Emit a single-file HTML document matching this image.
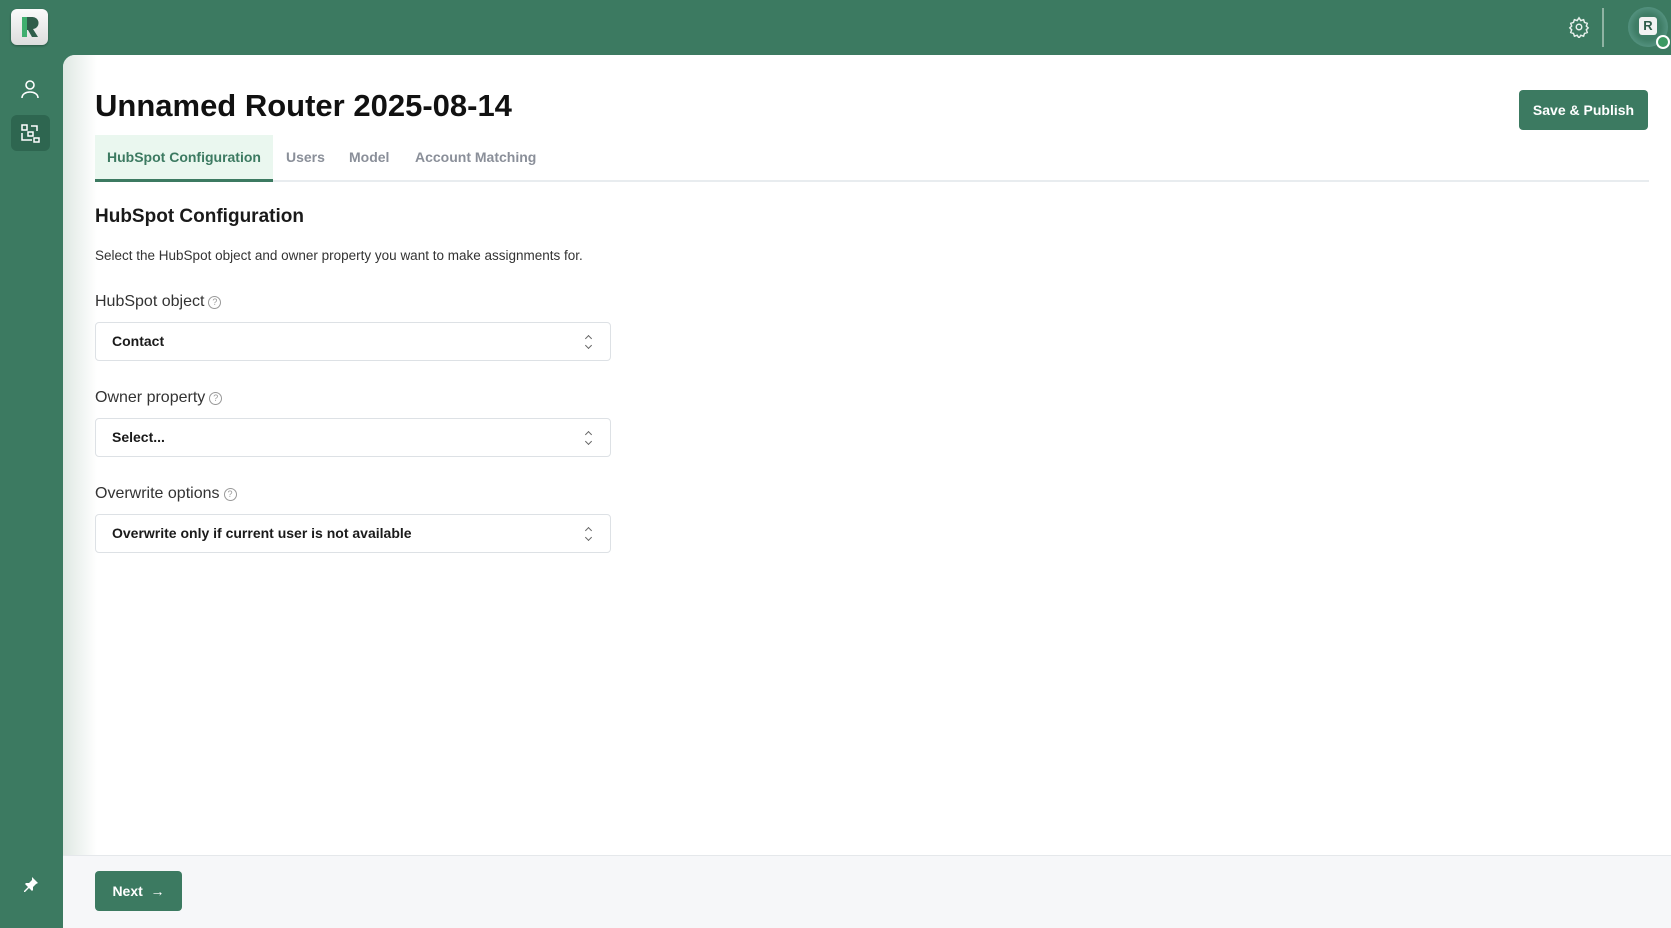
<!DOCTYPE html>
<html><head><meta charset="utf-8"><style>
*{box-sizing:border-box;margin:0;padding:0}
body{width:1671px;height:928px;overflow:hidden;background:#3c7a61;font-family:"Liberation Sans",sans-serif;position:relative}
.panel{position:absolute;left:63px;top:55px;right:0;bottom:0;background:#fff;border-top-left-radius:12px;overflow:hidden}
.panel:before{content:"";position:absolute;left:0;top:0;bottom:0;width:34px;background:linear-gradient(90deg,#dfe8e3,#fff)}
.abs{position:absolute}
h1{position:absolute;left:32px;top:33px;font-size:31px;font-weight:700;color:#111}
.tabs{position:absolute;left:32px;top:80px;right:22px;height:47px;border-bottom:2px solid #e8ecef}
.tab{position:absolute;top:0;height:47px;line-height:45px;font-size:14px;font-weight:700;color:#8a8f99}
.tab.on{background:#eaf7ef;color:#3c7a61;border-bottom:3px solid #3c7a61;padding:0 12px;left:0}
h2{position:absolute;left:32px;top:151px;font-size:19px;font-weight:700;color:#1a1a1a}
.desc{position:absolute;left:32px;top:193px;font-size:13.5px;color:#333}
.lbl{position:absolute;left:32px;font-size:16px;color:#333}
.q{display:inline-block;width:13px;height:13px;border:1px solid #999;border-radius:50%;font-size:9px;text-align:center;line-height:11px;color:#999;vertical-align:1px;margin-left:4px}
.sel{position:absolute;left:32px;width:516px;height:39px;border:1px solid #dde1e5;border-radius:4px;font-size:14px;font-weight:700;color:#1a1a1a;padding:0 16px;line-height:37px}
.sel:after{content:"";position:absolute;right:19px;top:13px;width:4px;height:4px;border-left:1.3px solid #666;border-top:1.3px solid #666;transform:rotate(45deg)}
.sel:before{content:"";position:absolute;right:19px;top:20px;width:4px;height:4px;border-right:1.3px solid #666;border-bottom:1.3px solid #666;transform:rotate(45deg)}
.btn{position:absolute;background:#3c7a61;color:#fff;font-weight:700;font-size:14px;border-radius:4px;text-align:center}
.footer{position:absolute;left:0;right:0;top:800px;bottom:0;background:#f6f7f9;border-top:1px solid #e5e8eb}
</style></head><body>
<div class="abs" style="left:11px;top:9px;width:37px;height:36px;border-radius:6px;background:linear-gradient(#fafafa,#ddd);box-shadow:0 1px 2px rgba(0,0,0,.3)">
<svg width="37" height="36" viewBox="0 0 37 36"><path d="M11 8h10a6 6 0 0 1 1 12l5 8h-6l-4-7h-1v7h-5z" fill="#2f5d4a"/><path d="M11 8h5v20h-5z" fill="#3fae6e"/></svg></div>
<svg class="abs" style="left:19px;top:78px" width="22" height="22" viewBox="0 0 22 22" fill="none" stroke="#fff" stroke-width="1.6"><circle cx="11" cy="7" r="4"/><path d="M3 20c0-4 4-6 8-6s8 2 8 6"/></svg>
<div class="abs" style="left:11px;top:115px;width:39px;height:36px;border-radius:6px;background:#2e6650"></div>
<svg class="abs" style="left:20px;top:123px" width="21" height="21" viewBox="0 0 21 21" fill="none" stroke="#fff" stroke-width="1.5"><rect x="2" y="2" width="5" height="5"/><rect x="8" y="9" width="5" height="4"/><rect x="14" y="15" width="5" height="4"/><path d="M11 3h6v5M2 10v7h10"/></svg>
<svg class="abs" style="left:23px;top:876px" width="16" height="16" viewBox="0 0 16 16" fill="#fff"><path d="M9 1l6 6-2 1-3 3 0 3-1 1-3-3-4 4-1 0 0-1 4-4-3-3 1-1 3 0 3-3z"/></svg>
<svg class="abs" style="left:1568px;top:16px" width="22" height="22" viewBox="0 0 24 24" fill="none" stroke="#e8f0ec" stroke-width="1.6"><circle cx="12" cy="12" r="3"/><path d="M12 2l2 3 3-1 1 3 3 1-1 3 2 2-2 2 1 3-3 1-1 3-3-1-2 3-2-3-3 1-1-3-3-1 1-3-2-2 2-2-1-3 3-1 1-3 3 1z"/></svg>
<div class="abs" style="left:1602px;top:8px;width:2px;height:39px;background:#8fb3a3"></div>
<div class="abs" style="left:1628px;top:7px;width:40px;height:40px;border-radius:50%;background:radial-gradient(circle,#3f7d66 45%,#6aa89a 100%)"></div>
<div class="abs" style="left:1639px;top:17px;width:18px;height:18px;border-radius:3px;background:#f2f2f2;font-size:13px;font-weight:700;color:#2f5d4a;text-align:center;line-height:18px">R</div>
<div class="abs" style="left:1656px;top:35px;width:14px;height:14px;border-radius:50%;background:#3c9a63;border:2px solid #fff"></div>
<div class="panel">
<h1>Unnamed Router 2025-08-14</h1>
<div class="btn" style="left:1456px;top:35px;width:129px;height:40px;line-height:40px">Save &amp; Publish</div>
<div class="tabs">
<div class="tab on">HubSpot Configuration</div>
<div class="tab" style="left:191px">Users</div>
<div class="tab" style="left:254px">Model</div>
<div class="tab" style="left:320px">Account Matching</div>
</div>
<h2>HubSpot Configuration</h2>
<div class="desc">Select the HubSpot object and owner property you want to make assignments for.</div>
<div class="lbl" style="top:238px">HubSpot object<span class="q">?</span></div>
<div class="sel" style="top:267px">Contact</div>
<div class="lbl" style="top:334px">Owner property<span class="q">?</span></div>
<div class="sel" style="top:363px">Select...</div>
<div class="lbl" style="top:430px">Overwrite options<span class="q">?</span></div>
<div class="sel" style="top:459px">Overwrite only if current user is not available</div>
<div class="footer"><div class="btn" style="left:32px;top:15px;width:87px;height:40px;line-height:40px">Next &nbsp;→</div></div>
</div>
</body></html>
